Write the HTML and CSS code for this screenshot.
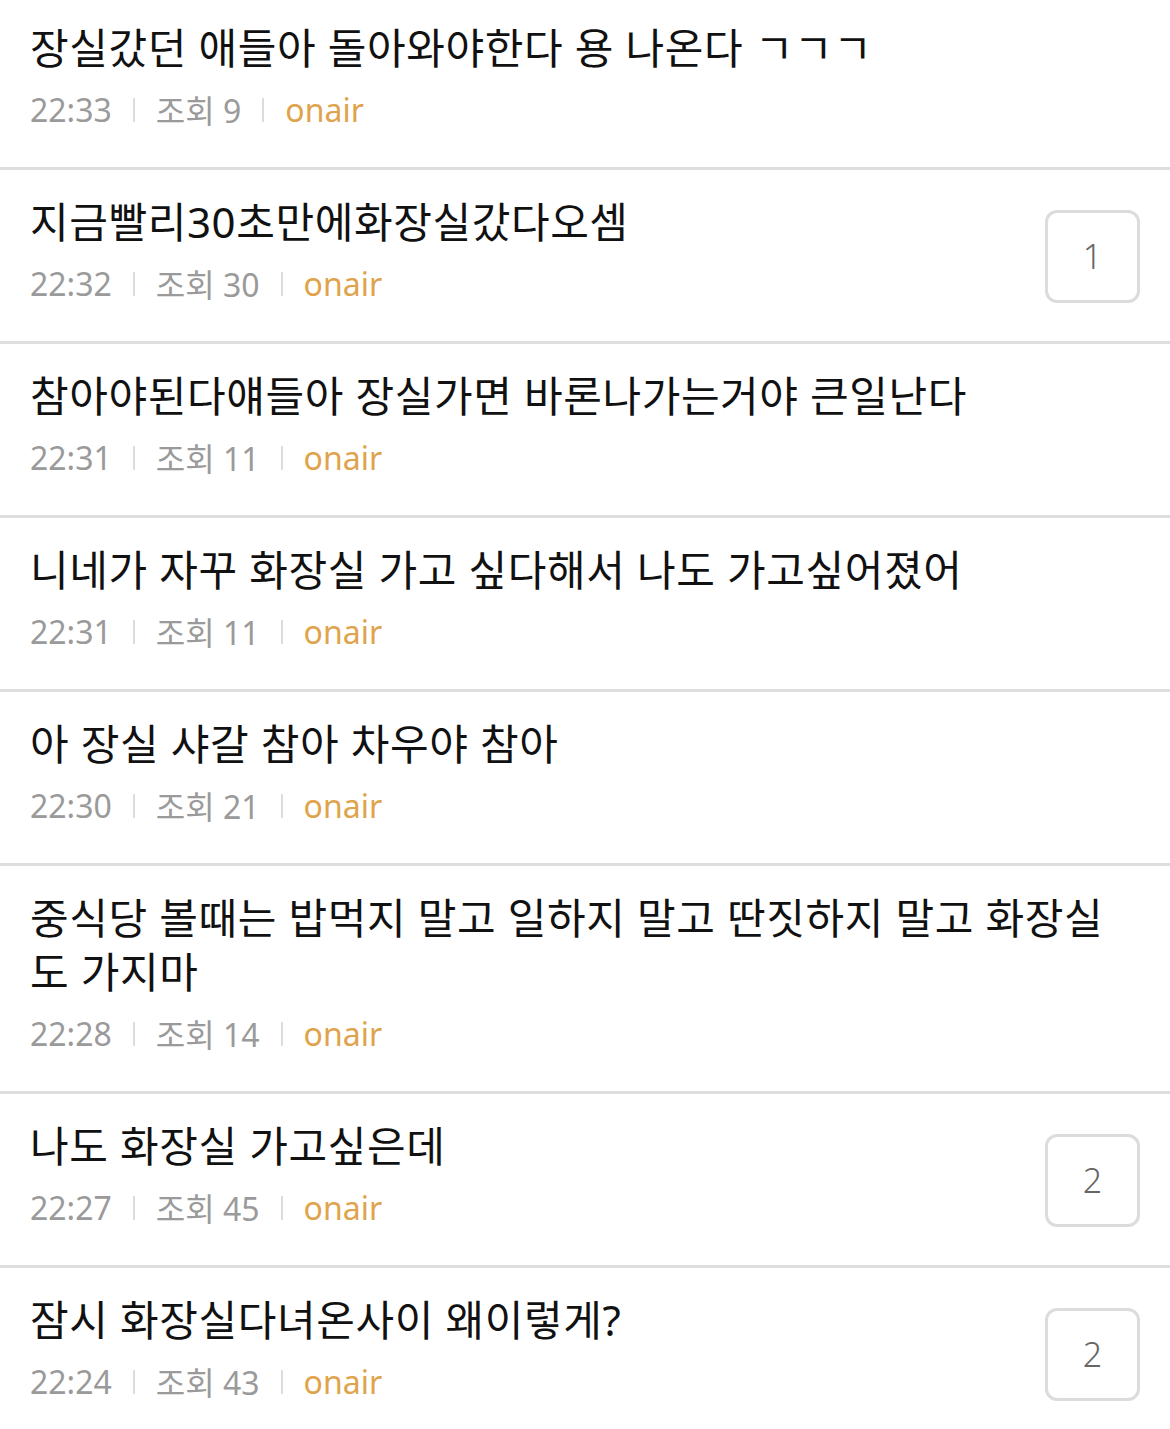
FILE: index.html
```html
<!DOCTYPE html>
<html lang="ko">

<head>
    <meta charset="UTF-8">
    <meta name="viewport" content="width=device-width, initial-scale=1.0">
    <title>게시판 목록</title>
    <link rel="stylesheet" href="styles.css">
</head>

<body>
    <ul class="post-list">
        <li class="post-item">
            <div class="post-body">
                <div class="post-title">장실갔던 애들아 돌아와야한다 용 나온다 ㄱㄱㄱ</div>
                <div class="post-meta"><span>22:33</span><i class="bar"></i><span>조회 9</span><i class="bar"></i><span class="board">onair</span></div>
            </div>
        </li>
        <li class="post-item">
            <div class="post-body">
                <div class="post-title">지금빨리30초만에화장실갔다오셈</div>
                <div class="post-meta"><span>22:32</span><i class="bar"></i><span>조회 30</span><i class="bar"></i><span class="board">onair</span></div>
            </div>
            <div class="reply-count">1</div>
        </li>
        <li class="post-item">
            <div class="post-body">
                <div class="post-title">참아야된다얘들아 장실가면 바론나가는거야 큰일난다</div>
                <div class="post-meta"><span>22:31</span><i class="bar"></i><span>조회 11</span><i class="bar"></i><span class="board">onair</span></div>
            </div>
        </li>
        <li class="post-item">
            <div class="post-body">
                <div class="post-title">니네가 자꾸 화장실 가고 싶다해서 나도 가고싶어졌어</div>
                <div class="post-meta"><span>22:31</span><i class="bar"></i><span>조회 11</span><i class="bar"></i><span class="board">onair</span></div>
            </div>
        </li>
        <li class="post-item">
            <div class="post-body">
                <div class="post-title">아 장실 샤갈 참아 차우야 참아</div>
                <div class="post-meta"><span>22:30</span><i class="bar"></i><span>조회 21</span><i class="bar"></i><span class="board">onair</span></div>
            </div>
        </li>
        <li class="post-item">
            <div class="post-body">
                <div class="post-title">중식당 볼때는 밥먹지 말고 일하지 말고 딴짓하지 말고 화장실 도 가지마</div>
                <div class="post-meta"><span>22:28</span><i class="bar"></i><span>조회 14</span><i class="bar"></i><span class="board">onair</span></div>
            </div>
        </li>
        <li class="post-item">
            <div class="post-body">
                <div class="post-title">나도 화장실 가고싶은데</div>
                <div class="post-meta"><span>22:27</span><i class="bar"></i><span>조회 45</span><i class="bar"></i><span class="board">onair</span></div>
            </div>
            <div class="reply-count">2</div>
        </li>
        <li class="post-item">
            <div class="post-body">
                <div class="post-title">잠시 화장실다녀온사이 왜이렇게?</div>
                <div class="post-meta"><span>22:24</span><i class="bar"></i><span>조회 43</span><i class="bar"></i><span class="board">onair</span></div>
            </div>
            <div class="reply-count">2</div>
        </li>
    </ul>
</body>

</html>
```

FILE: styles.css
```css
body {
    margin: 0;
    background-color: #fff;
    font-family: "Noto Sans", "Noto Sans CJK KR", sans-serif;
    color: #111;
}

.post-list {
    list-style: none;
    margin: -4px 0 0;
    padding: 0;
}

.post-item {
    display: flex;
    align-items: center;
    gap: 20px;
    padding: 25px 30px 36px;
    border-bottom: 3px solid #dedede;
}

.post-body {
    flex: 1;
    min-width: 0;
}

.post-title {
    font-size: 42px;
    line-height: 54px;
    letter-spacing: 0.6px;
    word-break: keep-all;
}

.post-meta {
    display: flex;
    align-items: center;
    margin-top: 12px;
    height: 44px;
    font-size: 32px;
    color: #9a9a9a;
}

.post-meta .board {
    color: #dfa34c;
}

.bar {
    display: inline-block;
    width: 2px;
    height: 24px;
    margin: 2px 21px 0;
    background-color: #dcdcdc;
}

.reply-count {
    flex: none;
    width: 89px;
    height: 87px;
    margin-top: 12px;
    border: 3px solid #dcdcdc;
    border-radius: 12px;
    display: flex;
    align-items: center;
    justify-content: center;
    font-size: 34px;
    font-weight: 300;
    color: #666;
}
```
